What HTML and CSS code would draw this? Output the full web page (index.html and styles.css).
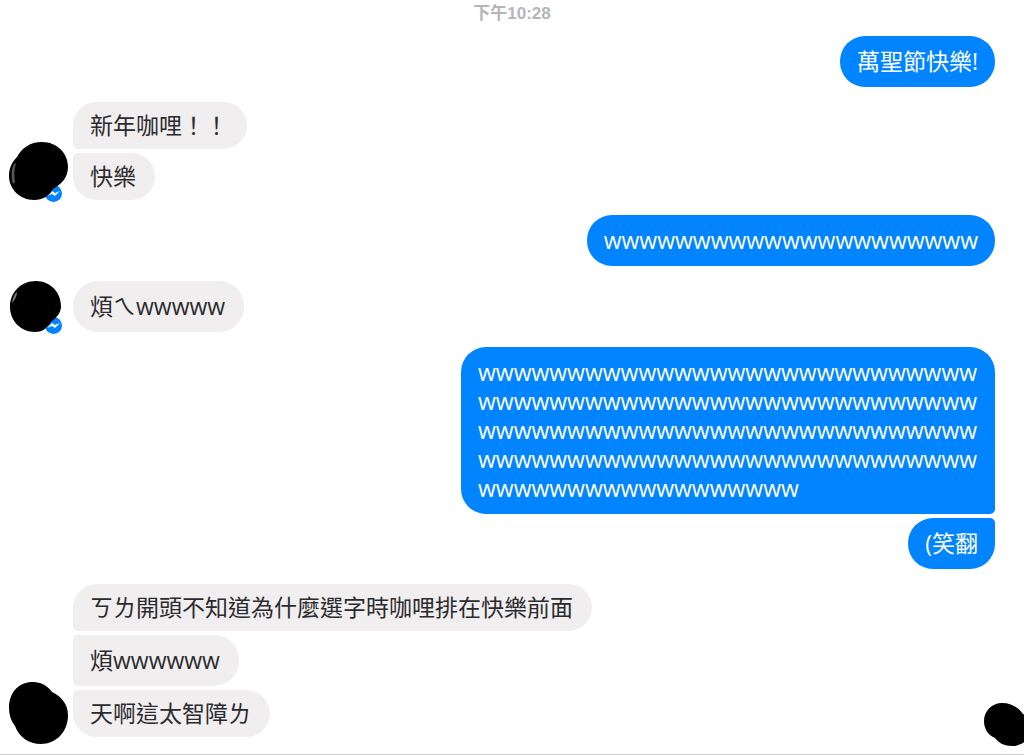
FILE: index.html
```
<!DOCTYPE html>
<html lang="zh-Hant">
<head>
  <meta charset="UTF-8">
  <meta name="viewport" content="width=device-width, initial-scale=1">
  <title>Messenger</title>
  <link rel="stylesheet" href="styles.css">
</head>
<body>

  <main class="chat">
    <time class="timestamp">下午10:28</time>

    <div class="group sent">
      <p class="bubble">萬聖節快樂!</p>
    </div>

    <div class="group received">
      <svg class="avatar" viewBox="0 10 60 50" aria-hidden="true">
        <circle cx="45.500" cy="53.500" r="8.500" fill="#0084ff"/>
        <path d="M39 56l5-5 3 2 5-2-5 5-3-2z" fill="#fff"/>
        <path d="M34 2C49 2 60 13 60 27C60 37 54 44 45 49C41 56 35 60 26 60C12 60 1 49 1 36C1 28 4 22 9 17C14 8 22 2 34 2Z"/>
        <path d="M6 24C3 30 3 38 5 44L7 42C6 36 6 30 8 23Z" fill="#555"/>
      </svg>
      <div class="messages">
        <p class="bubble compact">新年咖哩！！</p>
        <p class="bubble compact">快樂</p>
      </div>
    </div>

    <div class="group sent">
      <p class="bubble">wwwwwwwwwwwwwwwwwwwww</p>
    </div>

    <div class="group received">
      <svg class="avatar" viewBox="0 10 60 50" aria-hidden="true">
        <circle cx="45.500" cy="53.500" r="8.500" fill="#0084ff"/>
        <path d="M39 56l5-5 3 2 5-2-5 5-3-2z" fill="#fff"/>
        <path d="M28 9C42 9 53 20 53 34C53 41 49 45 43 50C38 57 34 60 27 60C13 60 2 49 2 35C2 20 13 9 28 9Z"/>
        <path d="M4 30C5 25 7 21 9 20C9 24 7 28 4 31Z" fill="#777"/>
      </svg>
      <div class="messages">
        <p class="bubble">煩ㄟwwwww</p>
      </div>
    </div>

    <div class="group sent">
      <p class="bubble">wwwwwwwwwwwwwwwwwwwwwwwwwwwwwwwwwwwwwwwwwwwwwwwwwwwwwwwwwwwwwwwwwwwwwwwwwwwwwwwwwwwwwwwwwwwwwwwwwwwwwwwwwwwwwwwwwwwwwwwwwwwwwwwwww</p>
      <p class="bubble">(笑翻</p>
    </div>

    <div class="group received">
      <svg class="avatar" viewBox="0 10 60 50" aria-hidden="true">
        <path d="M25 5C33 5 40 9 44 15C53 19 60 27 60 38C60 55 48 67 33 67C21 67 11 60 7 49C3 44 1 38 1 31C1 15 11 5 25 5Z"/>
      </svg>
      <div class="messages">
        <p class="bubble compact">ㄎㄌ開頭不知道為什麼選字時咖哩排在快樂前面</p>
        <p class="bubble">煩wwwwww</p>
        <p class="bubble compact">天啊這太智障ㄌ</p>
      </div>
      <svg class="seen" viewBox="0 0 40 40" aria-hidden="true">
        <path d="M18 6C27 6 34 10 39 17C44 20 48 24 48 30C48 42 38 49 28 49C20 49 15 46 11 41C4 38 0 32 0 24C0 14 8 6 18 6Z"/>
      </svg>
    </div>
  </main>

</body>
</html>
```
FILE: styles.css
```
* {
  box-sizing: border-box;
}

body {
  margin: 0;
  background: #fff;
  color: #2b2b2d;
  font-family: "Open Sans", "Noto Sans CJK TC", sans-serif;
  font-size: 23px;
}

.chat {
  display: flex;
  flex-direction: column;
  gap: 15px;
  min-height: 100vh;
  padding: 3px 0 16px;
  border-bottom: 1px solid #d2d2d6;
  overflow: hidden;
}

.timestamp {
  height: 18px;
  line-height: 22px;
  text-align: center;
  font-family: "Liberation Sans", "Noto Sans CJK TC", sans-serif;
  font-size: 17px;
  font-weight: 600;
  color: #b4b5b9;
}

.group {
  display: flex;
}

.sent {
  flex-direction: column;
  align-items: flex-end;
  gap: 4px;
  padding: 0 29px;
}

.received {
  align-items: flex-end;
  padding-left: 8px;
}

.messages {
  display: flex;
  flex-direction: column;
  align-items: flex-start;
  gap: 4px;
}

.bubble {
  margin: 0;
  max-width: 534px;
  padding: 11px 17px;
  border-radius: 25px;
  line-height: 29px;
  overflow-wrap: anywhere;
}

.compact {
  line-height: 25px;
}

.sent .bubble {
  background: #0084ff;
  color: #fff;
}

.received .bubble {
  padding-right: 19px;
  background: #f1eef0;
}

/* flatten the corners where bubbles of one sender meet */
.sent .bubble:not(:last-child) {
  border-bottom-right-radius: 5px;
}

.sent .bubble:not(:first-child) {
  border-top-right-radius: 5px;
}

.messages .bubble:not(:last-child) {
  border-bottom-left-radius: 5px;
}

.messages .bubble:not(:first-child) {
  border-top-left-radius: 5px;
}

.avatar {
  flex: none;
  width: 60px;
  height: 50px;
  margin-right: 5px;
  overflow: visible;
}

.seen {
  flex: none;
  width: 40px;
  height: 40px;
  margin-left: auto;
  overflow: visible;
}
```
